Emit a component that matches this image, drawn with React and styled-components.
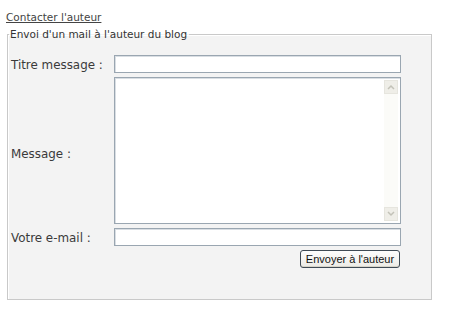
import React from "react";
import styled, { createGlobalStyle } from "styled-components";

const Global = createGlobalStyle`
  html, body { margin: 0; padding: 0; background: #fff; }
  body { font-family: "DejaVu Sans", Verdana, sans-serif; color: #333; }
`;

const Page = styled.div`
  width: 449px;
  height: 325px;
  padding: 11px 0 0 6px;
  box-sizing: border-box;
`;

const TopLink = styled.a`
  display: block;
  font-size: 10.5px;
  line-height: 13px;
  color: #444;
  text-decoration: underline;
  margin-bottom: 4px;
`;

const Fieldset = styled.fieldset`
  margin: 0 0 0 1px;
  width: 424px;
  height: 272px;
  box-sizing: border-box;
  padding: 14px 30px 0 3px;
  border: 1px solid #c9c9c9;
  box-shadow: inset 1px 1px 0 #fff, 1px 1px 0 #fff;
  background: #f3f3f3;
`;

const Legend = styled.legend`
  font-size: 10.5px;
  color: #333;
  padding: 0 2px 0 1px;
  margin-left: -2px;
  line-height: 13px;
`;

const Form = styled.div`
  display: grid;
  grid-template-columns: 103px 287px;
  row-gap: 4px;
  align-items: center;
`;

const Label = styled.label`
  font-size: 11.9px;
  color: #3a3a3a;
  line-height: 14px;
  padding-top: ${(p) => (p.$low ? "6px" : "1px")};
`;

const Input = styled.input`
  box-sizing: border-box;
  width: 287px;
  height: 18px;
  margin: 0;
  border: 1px solid #9aa6b1;
  box-shadow: inset 1px 1px 0 #d9dee3;
  background: #fff;
  padding: 0 2px;
  outline: none;
`;

const AreaWrap = styled.div`
  position: relative;
  width: 287px;
  height: 147px;
`;

const TextArea = styled.textarea`
  box-sizing: border-box;
  display: block;
  width: 287px;
  height: 147px;
  margin: 0;
  border: 1px solid #9aa6b1;
  box-shadow: inset 1px 1px 0 #d9dee3;
  background: #fff;
  resize: none;
  overflow: hidden;
  outline: none;
`;

const Scroll = styled.div`
  position: absolute;
  top: 3px;
  right: 3px;
  bottom: 3px;
  width: 14px;
  background: #fbfbf8;
  display: flex;
  flex-direction: column;
  justify-content: space-between;
`;

const ScrollBtn = styled.div`
  width: 14px;
  height: 14px;
  box-sizing: border-box;
  border: 1px solid #e6e5de;
  background: #efeee8;
  display: flex;
  align-items: center;
  justify-content: center;
`;

const ButtonRow = styled.div`
  grid-column: 2;
  display: flex;
  justify-content: flex-end;
`;

const Button = styled.button`
  font-family: "Liberation Sans", Arial, sans-serif;
  font-size: 11px;
  color: #111;
  height: 18px;
  width: 100px;
  padding: 0;
  margin-right: 1px;
  border: 1px solid #3f4a55;
  border-radius: 3px;
  background: linear-gradient(#fdfdfd, #ecebe6);
  box-shadow: inset 0 -1px 0 #d6d3c8;
`;

const Chevron = ({ up }) => (
  <svg width="8" height="6" viewBox="0 0 8 6">
    <path
      d={up ? "M1 5 L4 2 L7 5" : "M1 1 L4 4 L7 1"}
      fill="none"
      stroke="#c3c2b8"
      strokeWidth="1.5"
    />
  </svg>
);

export default function App() {
  return (
    <Page>
      <Global />
      <TopLink href="#">Contacter l'auteur</TopLink>
      <Fieldset>
        <Legend>Envoi d'un mail à l'auteur du blog</Legend>
        <Form>
          <Label>Titre message :</Label>
          <Input type="text" />
          <Label $low>Message :</Label>
          <AreaWrap>
            <TextArea />
            <Scroll>
              <ScrollBtn><Chevron up /></ScrollBtn>
              <ScrollBtn><Chevron /></ScrollBtn>
            </Scroll>
          </AreaWrap>
          <Label>Votre e-mail :</Label>
          <Input type="text" />
          <ButtonRow>
            <Button>Envoyer à l'auteur</Button>
          </ButtonRow>
        </Form>
      </Fieldset>
    </Page>
  );
}
